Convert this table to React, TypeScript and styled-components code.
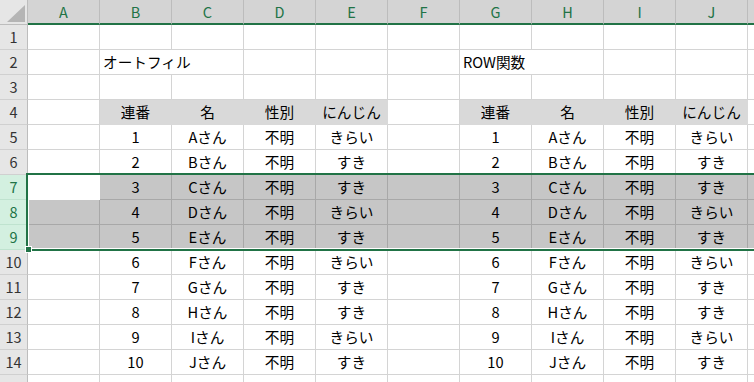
import React from "react";
import styled, { createGlobalStyle, css } from "styled-components";

const GlobalStyle = createGlobalStyle`
  html, body {
    margin: 0;
    padding: 0;
    background: #ffffff;
    overflow: hidden;
  }
  body {
    font-family: "Noto Sans CJK JP", "Noto Sans", sans-serif;
  }
`;

const COLS = ["A", "B", "C", "D", "E", "F", "G", "H", "I", "J", "K"];
const SELECTED = [7, 8, 9];
const NAMES = ["A", "B", "C", "D", "E", "F", "G", "H", "I", "J"];
const LIKES = ["きらい", "すき", "すき", "きらい", "すき", "きらい", "すき", "すき", "きらい", "すき"];
const HEADS = ["連番", "名", "性別", "にんじん"];

type Fill = "none" | "head" | "sel" | "active";
type CellData = { text?: string; align?: "left" | "center"; fill?: Fill; span?: number; hidden?: boolean };

function buildRow(r: number): CellData[] {
  const row: CellData[] = COLS.map(() => ({}));
  if (r === 2) {
    // titles overflow into the empty neighbour, so the gridline between is not drawn
    row[1] = { text: "オートフィル", align: "left", span: 2 };
    row[2] = { hidden: true };
    row[6] = { text: "ROW関数", align: "left", span: 2 };
    row[7] = { hidden: true };
  }
  if (r === 4) {
    HEADS.forEach((h, i) => {
      row[1 + i] = { text: h, fill: "head" };
      row[6 + i] = { text: h, fill: "head" };
    });
  }
  if (r >= 5 && r <= 14) {
    const n = r - 4;
    const vals = [String(n), `${NAMES[n - 1]}さん`, "不明", LIKES[n - 1]];
    vals.forEach((v, i) => {
      row[1 + i] = { text: v };
      row[6 + i] = { text: v };
    });
  }
  if (SELECTED.includes(r)) {
    row.forEach((c, i) => {
      c.fill = r === 7 && i === 0 ? "active" : "sel";
    });
  }
  return row.filter((c) => !c.hidden);
}

export default function App() {
  const rows = Array.from({ length: 15 }, (_, i) => i + 1);
  return (
    <>
      <GlobalStyle />
      <Sheet>
        <Corner />
        {COLS.map((c) => (
          <ColHeader key={c}>{c}</ColHeader>
        ))}
        {rows.map((r) => (
          <React.Fragment key={r}>
            <RowHeader $selected={SELECTED.includes(r)}>{r}</RowHeader>
            {buildRow(r).map((cell, i) => (
              <Cell
                key={i}
                $fill={cell.fill ?? "none"}
                $align={cell.align ?? "center"}
                $span={cell.span ?? 1}
              >
                {cell.text}
              </Cell>
            ))}
          </React.Fragment>
        ))}
        <SelectionFrame>
          <FillHandle />
        </SelectionFrame>
      </Sheet>
    </>
  );
}

const Sheet = styled.div`
  position: relative;
  display: grid;
  grid-template-columns: 28px repeat(11, 72px);
  grid-auto-rows: 25px;
  width: 820px;
  font-size: 14.67px;
  color: #000;
`;

const Corner = styled.div`
  position: relative;
  box-sizing: border-box;
  background: #e6e6e6;
  border-right: 1px solid #bdbdbd;
  border-bottom: 1px solid #bdbdbd;

  &::after {
    content: "";
    position: absolute;
    left: 7px;
    top: 5px;
    width: 18px;
    height: 17px;
    background: #b5b5b5;
    clip-path: polygon(100% 0, 100% 100%, 0 100%);
  }
`;

const ColHeader = styled.div`
  box-sizing: border-box;
  display: flex;
  align-items: center;
  justify-content: center;
  background: #d4d4d4;
  border-right: 1px solid #bcbcbc;
  border-bottom: 2px solid #217346;
  color: #217346;
  font-size: 14.5px;
  padding-bottom: 1px;
`;

const RowHeader = styled.div<{ $selected: boolean }>`
  box-sizing: border-box;
  display: flex;
  align-items: center;
  justify-content: center;
  background: #e6e6e6;
  border-right: 1px solid #bdbdbd;
  border-bottom: 1px solid #d0d0d0;
  color: #333;
  font-size: 14.5px;
  padding-bottom: 1px;
  ${({ $selected }) =>
    $selected &&
    css`
      background: #d3f0e0;
      color: #217346;
      border-bottom-color: #bfe3cf;
    `}
`;

const fills: Record<Fill, ReturnType<typeof css>> = {
  none: css`
    background: #ffffff;
    border-color: #d4d4d4;
  `,
  head: css`
    background: #d9d9d9;
    border-color: #d9d9d9;
  `,
  sel: css`
    background: #c6c6c6;
    border-color: #a8a8a8;
  `,
  active: css`
    background: #ffffff;
    border-color: #ffffff;
  `,
};

const Cell = styled.div<{ $fill: Fill; $align: "left" | "center"; $span: number }>`
  grid-column: span ${({ $span }) => $span};
  box-sizing: border-box;
  display: flex;
  align-items: center;
  justify-content: ${({ $align }) => ($align === "left" ? "flex-start" : "center")};
  padding: 0 3px 2px;
  border-right: 1px solid;
  border-bottom: 1px solid;
  white-space: nowrap;
  ${({ $fill }) => fills[$fill]}
`;

const SelectionFrame = styled.div`
  position: absolute;
  left: 26px;
  top: 173px;
  width: 800px;
  height: 78px;
  box-sizing: border-box;
  border: 2px solid #217346;
  border-right: none;
  box-shadow: inset 1px -1px 0 #ffffff;
  pointer-events: none;
`;

const FillHandle = styled.div`
  position: absolute;
  left: -2px;
  bottom: -3px;
  width: 5px;
  height: 5px;
  background: #217346;
  outline: 1px solid #ffffff;
`;
